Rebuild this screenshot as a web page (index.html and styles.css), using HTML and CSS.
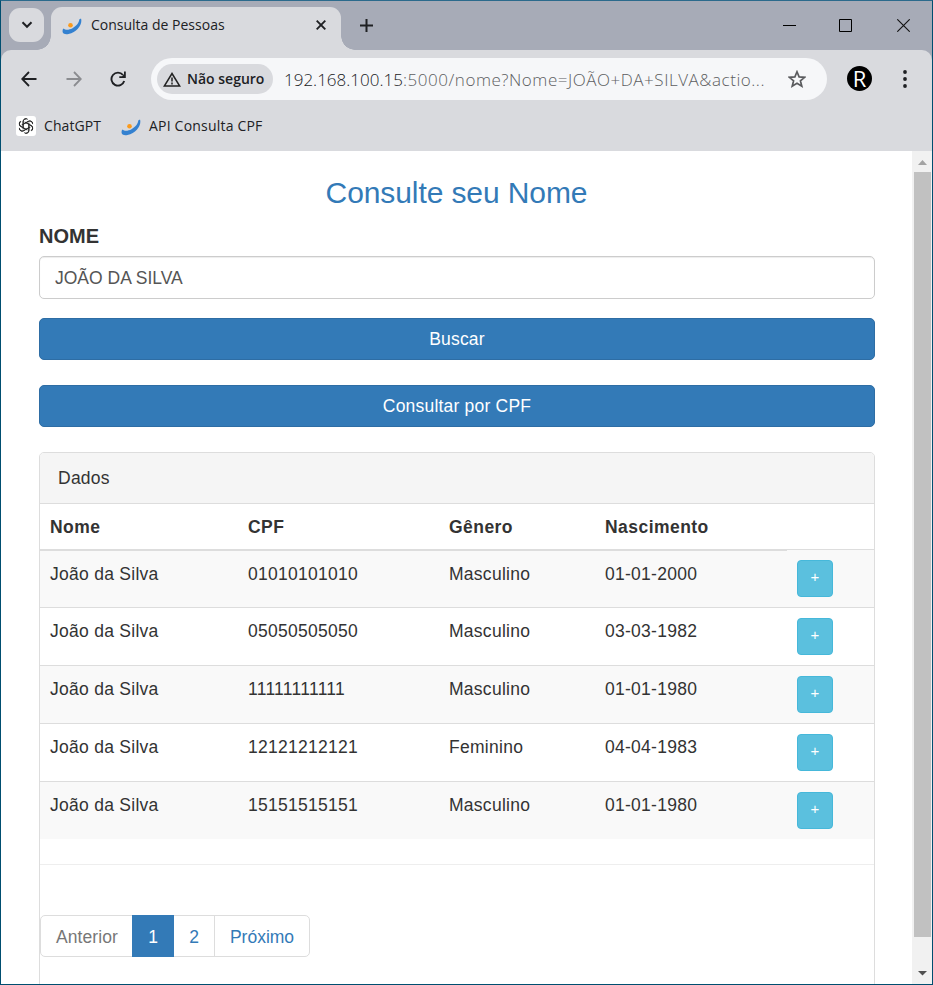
FILE: index.html
```html
<!DOCTYPE html>
<html lang="pt-BR">
<head>
<meta charset="utf-8">
<title>Consulta de Pessoas</title>
<link rel="stylesheet" href="styles.css">
</head>
<body>
<svg class="defs" width="0" height="0" aria-hidden="true">
  <symbol id="swoosh" viewBox="0 0 20 17">
    <path d="M19 .5C20.800 6 15.500 14 6.500 16 3.500 16.500 1.500 16 .8 14.500.3 13 .5 11.500 1.500 10.500 3.500 12.300 7 12 10.500 10.200 14.500 8 17.200 4.500 17.200 1.500z" fill="#3481d0"/>
    <circle cx="8.500" cy="7.300" r="2.300" fill="#fb9a1c"/>
  </symbol>
</svg>
<div class="window">
  <header class="tabstrip">
    <button class="tab-search" aria-label="Pesquisar guias"><svg width="12" height="8" viewBox="0 0 12 8"><path d="M1.500 1.300 6 5.800l4.500-4.500" fill="none" stroke="#1f2023" stroke-width="2"/></svg></button>
    <div class="tab">
      <svg class="favicon" width="20" height="17"><use href="#swoosh"/></svg>
      <span class="tab-title">Consulta de Pessoas</span>
      <svg class="tab-close" width="10" height="10" viewBox="0 0 10 10"><path d="M.7.700l8.600 8.600M9.300.700.700 9.300" stroke="#1f2023" stroke-width="1.900"/></svg>
    </div>
    <svg class="new-tab" width="13" height="13" viewBox="0 0 13 13"><path d="M6.500 0v13M0 6.500h13" stroke="#1f2023" stroke-width="2"/></svg>
    <div class="controls">
      <svg width="13" height="13" viewBox="0 0 13 13"><path d="M0 6.500h13" stroke="#000"/></svg>
      <svg width="13" height="13" viewBox="0 0 13 13"><path d="M.5.500h12v12H.5z" fill="none" stroke="#000"/></svg>
      <svg width="13" height="13" viewBox="0 0 13 13"><path d="M.3.300l12.400 12.400M12.700.300.300 12.700" stroke="#111" stroke-width="1.100"/></svg>
    </div>
  </header>
  <nav class="toolbar">
    <svg class="back" width="16" height="16" viewBox="0 0 16 16"><path d="M8 1 1.200 8 8 15M1.200 8H15.500" fill="none" stroke="#1f2023" stroke-width="1.800"/></svg>
    <svg class="forward" width="16" height="16" viewBox="0 0 16 16"><path d="M8 1l6.800 7L8 15M14.800 8H.5" fill="none" stroke="#8b8c90" stroke-width="1.800"/></svg>
    <svg class="reload" width="17" height="16" viewBox="0 0 17 16"><path d="M13 4A6.500 6.500 0 1 0 14.200 10" fill="none" stroke="#1f2023" stroke-width="1.900"/><path d="M15.800.500V7H9.300V5.200h2.800l1.900-1.900V.5z" fill="#1f2023"/></svg>
    <div class="omnibox">
      <div class="chip">
        <svg width="18" height="15" viewBox="0 0 18 15"><path d="M9 1.500 16.700 14H1.300z" fill="none" stroke="#222" stroke-width="1.500"/><path d="M9 5.500v4M9 10.500v2" stroke="#222" stroke-width="1.500"/></svg>
        <span class="chip-text">Não seguro</span>
      </div>
      <span class="url"><span class="host">192.168.100.15</span><span class="path">:5000/nome?Nome=JOÃO+DA+SILVA&amp;actio...</span></span>
      <svg class="star" width="18" height="18" viewBox="0 0 18 18"><path d="M9 1.800l2.100 5.100 5.600.400-4.300 3.500 1.400 5.400L9 13.300l-4.800 2.900 1.400-5.400L1.300 7.300l5.600-.400z" fill="none" stroke="#5a5b5e" stroke-width="1.700"/></svg>
    </div>
    <div class="avatar">R</div>
    <svg class="menu" width="4" height="18" viewBox="0 0 4 18"><g fill="#1f2023"><circle cx="2" cy="2" r="1.900"/><circle cx="2" cy="9" r="1.900"/><circle cx="2" cy="16" r="1.900"/></g></svg>
  </nav>
  <div class="bookmarks">
    <span class="gpt"><svg width="16" height="16" viewBox="-12 -12 24 24"><g fill="none" stroke="#2b2b2b" stroke-width="1.500"><g id="petal"><path d="M-4.300 5V-6.500A4.300 4.300 0 0 1 2.600-10M-4.300-2.500 3.500-7A4.300 4.300 0 0 1 9.800-4.500"/></g><use href="#petal" transform="rotate(60)"/><use href="#petal" transform="rotate(120)"/><use href="#petal" transform="rotate(180)"/><use href="#petal" transform="rotate(240)"/><use href="#petal" transform="rotate(300)"/></g></svg></span>
    <span class="bm-gpt">ChatGPT</span>
    <svg class="bm-icon" width="20" height="17"><use href="#swoosh"/></svg>
    <span class="bm-api">API Consulta CPF</span>
  </div>
  <div class="viewport">
    <main class="page">
      <h3>Consulte seu Nome</h3>
      <label for="nome">NOME</label>
      <input id="nome" class="field" type="text" value="JOÃO DA SILVA">
      <button class="btn">Buscar</button>
      <button class="btn">Consultar por CPF</button>
      <section class="panel">
        <div class="panel-heading">Dados</div>
        <table>
          <colgroup><col class="c1"><col class="c2"><col class="c3"><col class="c4"><col></colgroup>
          <thead><tr><th>Nome</th><th>CPF</th><th>Gênero</th><th>Nascimento</th><th></th></tr></thead>
          <tbody>
            <tr><td>João da Silva</td><td>01010101010</td><td>Masculino</td><td>01-01-2000</td><td><button class="more">+</button></td></tr>
            <tr><td>João da Silva</td><td>05050505050</td><td>Masculino</td><td>03-03-1982</td><td><button class="more">+</button></td></tr>
            <tr><td>João da Silva</td><td>11111111111</td><td>Masculino</td><td>01-01-1980</td><td><button class="more">+</button></td></tr>
            <tr><td>João da Silva</td><td>12121212121</td><td>Feminino</td><td>04-04-1983</td><td><button class="more">+</button></td></tr>
            <tr><td>João da Silva</td><td>15151515151</td><td>Masculino</td><td>01-01-1980</td><td><button class="more">+</button></td></tr>
          </tbody>
        </table>
        <hr>
        <div class="pagination"><span class="prev">Anterior</span><span class="active">1</span><span class="two">2</span><span class="next">Próximo</span></div>
      </section>
    </main>
    <div class="scrollbar">
      <svg width="20" height="21" viewBox="0 0 20 21"><path d="M10.500 9l4.500 5H6z" fill="#a3a3a3"/></svg>
      <div class="thumb"></div>
      <svg width="20" height="21" viewBox="0 0 20 21"><path d="M10.500 12.500 6 8h9z" fill="#505050"/></svg>
    </div>
  </div>
</div>
</body>
</html>
```

FILE: styles.css
```css
* { box-sizing: border-box; }
body { margin: 0; overflow: hidden; }
button, input { font: inherit; margin: 0; }
svg { display: block; flex: none; }
.defs { position: absolute; }
.window {
  width: 933px; height: 985px; overflow: hidden;
  display: flex; flex-direction: column;
  border: 1px solid #004e70; border-top-color: #2b6a8c;
  background: #fff; color: #202124;
  font-family: "Open Sans", "Noto Sans", sans-serif;
}

/* Browser chrome */
.tabstrip { position: relative; z-index: 1; height: 49px; flex: none; display: flex; align-items: flex-start; background: #a7abb7; }
.tab-search {
  width: 35px; height: 34px; margin: 7px 0 0 8px; padding: 0;
  display: flex; align-items: center; justify-content: center;
  border: 0; border-radius: 11px; background: #d9dade;
}
.tab {
  position: relative; width: 290px; height: 43px; margin: 6px 0 0 7px; padding: 0 15px 7px 11px;
  display: flex; align-items: center;
  border-radius: 11px 11px 0 0; background: #d9dade;
}
.tab::before, .tab::after { content: ""; position: absolute; bottom: 0; width: 14px; height: 14px; }
.tab::before { left: -14px; background: radial-gradient(circle at 0 0, transparent 13.500px, #d9dade 14px); }
.tab::after { right: -14px; background: radial-gradient(circle at 100% 0, transparent 13.500px, #d9dade 14px); }
.tab .favicon { margin-top: 2px; }
.tab-title { margin-left: 9px; font-size: 14px; line-height: 20px; white-space: nowrap; }
.tab-close { margin-left: auto; }
.new-tab { margin: 18px 0 0 19px; }
.controls { display: flex; gap: 43px; margin: 18px 22px 0 auto; }
.controls svg:last-child { margin-left: 2px; }

.toolbar { height: 57px; flex: none; display: flex; align-items: center; padding: 1px 23px 0 20px; background: #d9dade; border-radius: 10px 10px 0 0; box-shadow: 0 -10px 0 10px #a7abb7; clip-path: inset(0); }
.forward { margin-left: 29px; }
.reload { margin-left: 28px; }
.omnibox { width: 676px; height: 42px; margin-left: 24px; padding: 0 21px 0 6px; display: flex; align-items: center; border-radius: 21px; background: #f6f7f9; }
.chip { width: 116px; height: 30px; padding-left: 6px; display: flex; align-items: center; border-radius: 15px; background: #d9dade; }
.chip-text { margin-left: 6px; padding-bottom: 1px; font-size: 14px; font-weight: 600; white-space: nowrap; }
.url { margin-left: 11px; font-size: 17px; font-weight: 300; white-space: nowrap; }
.host { color: #202124; }
.path { color: #5d5e61; letter-spacing: .54px; }
.star { margin-left: auto; }
.avatar { width: 25px; height: 25px; margin: 0 0 1px 20px; border-radius: 50%; background: #000; color: #fff; font-size: 22px; font-weight: 500; line-height: 25px; text-align: center; }
.menu { margin-left: auto; margin-right: 2px; }

.bookmarks { height: 44px; flex: none; display: flex; align-items: center; padding: 0 0 6px 15px; background: #d9dade; font-size: 14px; white-space: nowrap; }
.gpt { width: 20px; height: 20px; display: flex; align-items: center; justify-content: center; border-radius: 3px; background: #fff; }
.bm-gpt { width: 58px; margin-left: 8px; padding-bottom: 2px; letter-spacing: .1px; }
.bm-icon { margin: 3px 0 0 19px; }
.bm-api { margin-left: 8px; padding-bottom: 2px; letter-spacing: .2px; }

/* Web page */
.viewport { flex: 1; min-height: 0; display: flex; overflow: hidden; }
.page { flex: 1; padding: 21px 37px 0 38px; color: #333; font: 17.500px/25px "Liberation Sans", sans-serif; }
h3 { margin: 0; padding-right: 1px; font-size: 30px; font-weight: 400; line-height: 41px; letter-spacing: -.1px; text-align: center; color: #337ab7; }
label { display: block; height: 43px; font-size: 20px; font-weight: 700; line-height: 46px; }
.field { display: block; width: 100%; height: 43px; padding: 2px 15px 0; border: 1px solid #ccc; border-radius: 5px; background: #fff; color: #555; box-shadow: inset 0 1px 1px rgba(0, 0, 0, .075); }
.btn { display: block; width: 100%; height: 42px; padding: 0; border: 1px solid #2e6da4; border-radius: 5px; background: #337ab7; color: #fff; letter-spacing: .2px; }
.field + .btn { margin-top: 19px; }
.btn + .btn { margin-top: 25px; }
.panel { height: 600px; margin-top: 25px; border: 1px solid #ddd; border-radius: 5px; }
.panel-heading { height: 51px; padding: 13px 18px 0; border-bottom: 1px solid #ddd; border-radius: 4px 4px 0 0; background: #f5f5f5; letter-spacing: .25px; }
table { width: 100%; table-layout: fixed; border-collapse: separate; border-spacing: 0; letter-spacing: .27px; }
.c1 { width: 198px; }
.c2 { width: 201px; }
.c3 { width: 156px; }
.c4 { width: 192px; }
th, td { padding: 0 10px; text-align: left; vertical-align: top; }
th { height: 47px; padding-top: 11px; border-bottom: 2px solid #ddd; letter-spacing: .45px; }
th:last-child { border-bottom: 1px solid #f9f9f9; box-shadow: inset 0 -1px #ddd; }
td { height: 58px; padding-top: 11px; border-top: 1px solid #ddd; }
td:last-child { padding-top: 10px; }
tr:first-child td { height: 56px; border-top: 0; }
tr:first-child td:last-child { padding-top: 9px; }
tbody tr:nth-child(odd) td { background: #f9f9f9; }
.more { display: block; width: 36px; height: 37px; padding: 0 0 4px; border: 1px solid #46b8da; border-radius: 4px; background: #5bc0de; color: #fff; font-size: 15px; line-height: 20px; letter-spacing: 0; }
hr { height: 1px; margin: 25px 0 50px; border: 0; background: #eee; }
.pagination { width: 270px; height: 42px; display: flex; border: 1px solid #ddd; border-radius: 5px; color: #337ab7; line-height: 42px; text-align: center; }
.pagination .prev { width: 91px; padding-left: 1px; color: #777; letter-spacing: .1px; }
.pagination .active { width: 42px; height: 42px; margin-top: -1px; background: #337ab7; color: #fff; line-height: 44px; }
.pagination .two { width: 41px; border-right: 1px solid #ddd; }
.pagination .next { flex: 1; }

.scrollbar { width: 20px; flex: none; display: flex; flex-direction: column; background: #f1f1f1; }
.thumb { width: 17px; height: 765px; margin-left: 2px; background: #c1c1c1; }
.scrollbar svg:last-child { margin-top: auto; }
```
